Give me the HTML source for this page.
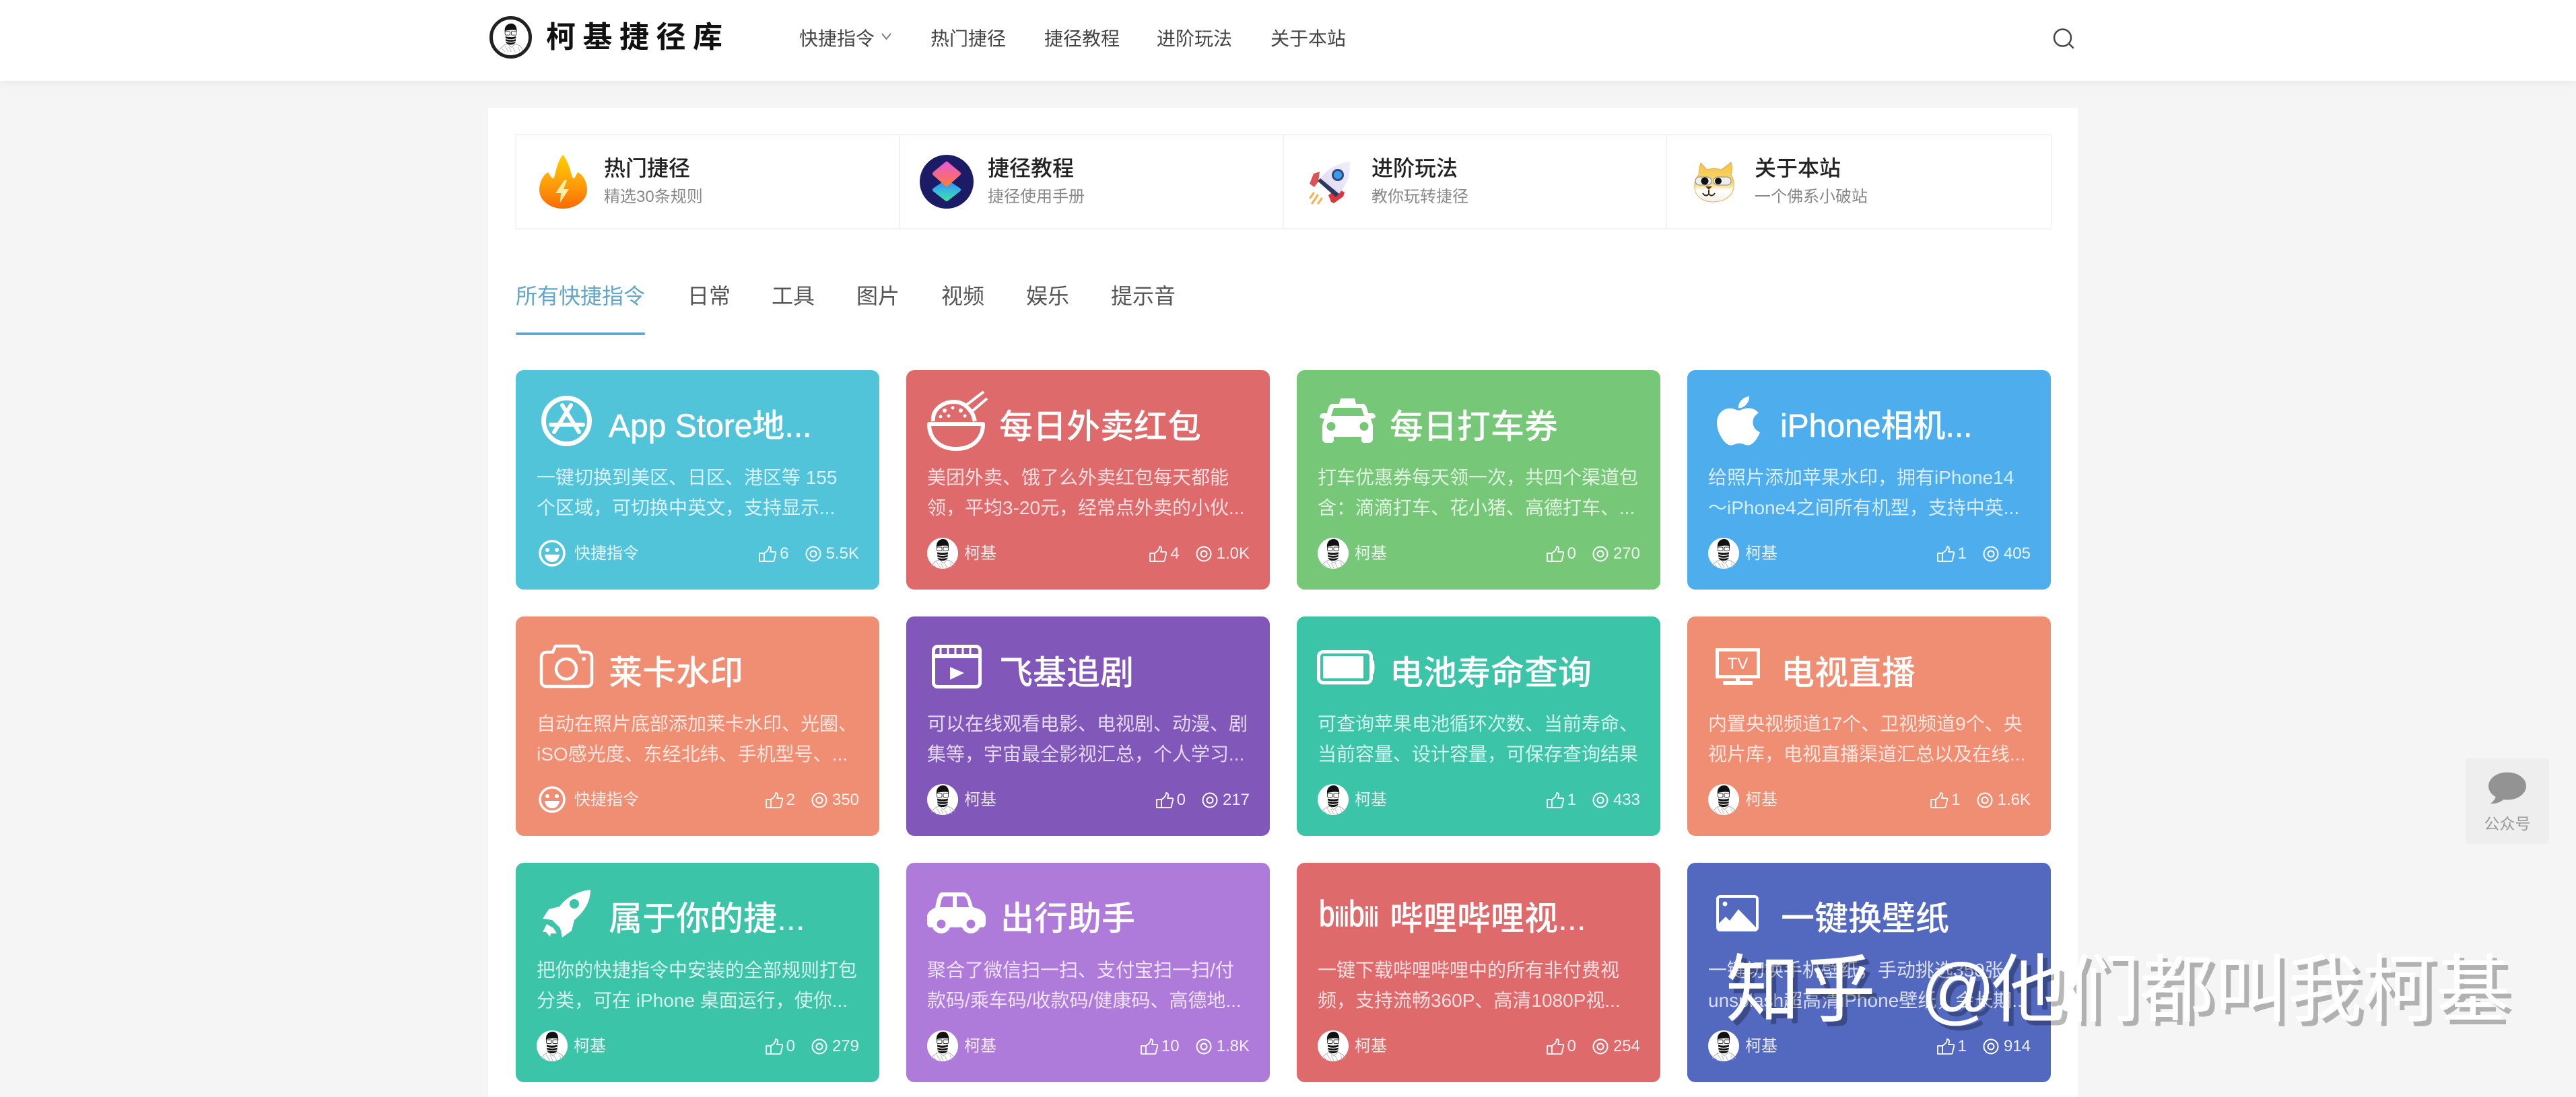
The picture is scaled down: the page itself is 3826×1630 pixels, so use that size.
<!DOCTYPE html>
<html lang="zh-CN"><head><meta charset="utf-8"><title>柯基捷径库</title>
<style>
*{box-sizing:border-box;margin:0;padding:0}
html,body{width:3826px;height:1630px;overflow:hidden;background:#f5f5f5;font-family:"Liberation Sans","Noto Sans CJK SC",sans-serif}
.abs,.hd,.panel,.card,.card>*{position:absolute}
.hd{left:0;top:0;width:3826px;height:120px;background:#fff;box-shadow:0 3px 14px rgba(0,0,0,.06)}
.logo{position:absolute;left:811px;top:24px;line-height:64px;font-size:44px;font-weight:700;letter-spacing:10.500px;color:#111;white-space:nowrap}
.nav{position:absolute;top:37px;line-height:42px;font-size:28px;color:#444;white-space:nowrap}
.panel{left:725px;top:160px;width:2361px;height:1470px;background:#fff}
.qbox{position:absolute;left:765px;top:199px;width:2283px;height:142px;border:2px solid #f4f4f4}
.qd{position:absolute;top:199px;width:2px;height:142px;background:#f2f2f2}
.qt{position:absolute;top:228px;line-height:44px;font-size:32px;font-weight:500;color:#222;white-space:nowrap}
.qs{position:absolute;top:275px;line-height:36px;font-size:24px;color:#888;white-space:nowrap}
.tab{position:absolute;top:416px;line-height:48px;font-size:32px;color:#555;white-space:nowrap}
.card{width:540px;height:326px;border-radius:12px;color:#fff;overflow:hidden}
.t{left:138px;top:54px;line-height:60px;font-size:50px;font-weight:500;white-space:nowrap}
.t.l{font-size:48px}
.t.r3{top:53px}
.t .m{-webkit-text-stroke:.6px #fff}
.d{left:31px;top:137px;line-height:45px;font-size:28px;color:rgba(255,255,255,.78);white-space:nowrap}
.av{left:31px;top:249px;width:46px;height:46px}
.sm{left:34px;top:252px;width:40px;height:40px}
.n{left:86px;top:255px;line-height:36px;font-size:24px;color:rgba(255,255,255,.85);white-space:nowrap}
.s{right:30px;top:255px;height:36px;line-height:36px;font-size:24px;display:flex;align-items:center;color:rgba(255,255,255,.88);white-space:nowrap}
.s svg{display:block}
.s .a{margin-left:5px}.s .b{margin-left:24px;margin-right:7px}
.ic{overflow:visible}
.wm{position:absolute;top:1402px;line-height:140px;font-size:110px;color:#fff;white-space:nowrap;text-shadow:7px 7px 0 rgba(0,0,0,.28);z-index:9}
.fb{position:absolute;left:3662px;top:1127px;width:124px;height:127px;background:#eee;border-radius:4px}
.fbt{position:absolute;left:0;width:124px;top:80px;text-align:center;line-height:34px;font-size:23px;color:#999}
</style></head><body>
<svg width="0" height="0" style="position:absolute">
<defs>
<symbol id="face" viewBox="0 0 46 46">
<path d="M6 42C10 36 15 33 19 33L24 38L30 33C35 34 39 37 41 42" fill="none" stroke="#aaa" stroke-width="1"/>
<path d="M14 36L20 45M26 38L30 45M20 37L24 45M10 40L14 45M34 37L37 44" stroke="#bbb" stroke-width="1"/>
<path d="M14 15C13 6 18 2 24 2C30 2 33 8 32 15L31 18H15Z" fill="#111"/>
<path d="M15 13C19 12 26 11 31 12L31 22H15Z" fill="#f2f2f2"/>
<rect x="14.500" y="14" width="7.500" height="5.500" rx="1.500" fill="#fff" stroke="#444" stroke-width="1"/>
<rect x="24" y="14" width="7.500" height="5.500" rx="1.500" fill="#fff" stroke="#444" stroke-width="1"/>
<path d="M15 21.500C19 23 27 23 31 21.500L30.500 30C28.500 35.500 17.500 35.500 15.500 30Z" fill="#111"/>
<path d="M15 25C20 26.800 26 26.800 31 25M15.500 29C20 30.800 26 30.800 30.500 29" stroke="#eee" stroke-width="1.300" fill="none"/>
</symbol>
<symbol id="avatar" viewBox="0 0 46 46">
<circle cx="23" cy="23" r="23" fill="#fff"/><use href="#face" width="46" height="46"/>
</symbol>
<symbol id="like" viewBox="0 0 26 24">
<path d="M8 11L12 8C14 6 15 3 15 1C18 1 19 4 17 9H23.500C25 9 25.500 10 25.200 11.200L22.600 22C22.300 23 21.500 23 21 23H8ZM1 11H8V23H1Z" fill="none" stroke="#fff" stroke-width="1.800" stroke-linejoin="round"/>
</symbol>
<symbol id="eye" viewBox="0 0 24 24">
<circle cx="12" cy="12" r="10.500" fill="none" stroke="#fff" stroke-width="2"/><circle cx="12" cy="12" r="4.500" fill="none" stroke="#fff" stroke-width="2"/>
</symbol>
<symbol id="smile" viewBox="0 0 40 40">
<circle cx="20" cy="20" r="18" fill="none" stroke="#fff" stroke-width="3.500"/>
<circle cx="13" cy="15" r="3" fill="#fff"/><circle cx="27" cy="15" r="3" fill="#fff"/>
<path d="M9 22H31C30 30 25 33 20 33C15 33 10 30 9 22Z" fill="#fff"/>
</symbol>
</defs></svg>

<div class="hd">
<svg class="abs" style="left:727px;top:24px" width="63" height="63" viewBox="0 0 63 63"><circle cx="31.500" cy="31.500" r="29" fill="#fff" stroke="#222" stroke-width="5"/><use href="#face" x="9" y="9" width="45" height="45"/></svg>
<div class="logo">柯基捷径库</div>
<div class="nav" style="left:1187px">快捷指令</div>
<svg class="abs" style="left:1308px;top:48px" width="17" height="12" viewBox="0 0 17 12"><path d="M2 2L8.500 10L15 2" fill="none" stroke="#777" stroke-width="1.800"/></svg>
<div class="nav" style="left:1382px">热门捷径</div>
<div class="nav" style="left:1551px">捷径教程</div>
<div class="nav" style="left:1718px">进阶玩法</div>
<div class="nav" style="left:1887px">关于本站</div>
<svg class="abs" style="left:3048px;top:40px" width="36" height="34" viewBox="0 0 36 34"><circle cx="15.500" cy="16" r="12.500" fill="none" stroke="#444" stroke-width="2.500"/><path d="M26 26L31 31" stroke="#444" stroke-width="2.500" stroke-linecap="round"/></svg>
</div>

<div class="panel"></div>
<div class="qbox"></div>
<div class="qd" style="left:1335px"></div><div class="qd" style="left:1905px"></div><div class="qd" style="left:2474px"></div>

<svg class="abs" style="left:801px;top:230px" width="71" height="80" viewBox="0 0 71 80"><defs><linearGradient id="fg" x1="0" y1="0" x2="0" y2="1"><stop offset="0" stop-color="#ffd000"/><stop offset=".55" stop-color="#ff9d0a"/><stop offset="1" stop-color="#fb6a05"/></linearGradient></defs>
<path d="M35 0C42 8 46 22 49 34L52 35L57 26C66 30 71 42 71 52C71 68 54 80 35 80C16 80 0 68 0 52C0 42 5 30 13 26L19 35L22 34C25 22 28 8 35 0Z" fill="url(#fg)"/>
<path d="M37 38L24 57H32L31 71L44 51H36L41 38Z" fill="#fdeea6"/></svg>
<div class="qt" style="left:897px">热门捷径</div><div class="qs" style="left:897px">精选30条规则</div>

<svg class="abs" style="left:1366px;top:230px" width="80" height="80" viewBox="0 0 80 80"><defs>
<linearGradient id="sa" x1="0" y1="0" x2="0" y2="1"><stop offset="0" stop-color="#ea5cc8"/><stop offset=".6" stop-color="#f56a80"/><stop offset="1" stop-color="#ff7a45"/></linearGradient>
<linearGradient id="sb" x1="0" y1="0" x2="0" y2="1"><stop offset="0" stop-color="#2f8ff5"/><stop offset=".6" stop-color="#38c0d8"/><stop offset="1" stop-color="#3fdca5"/></linearGradient></defs>
<circle cx="40" cy="40" r="40" fill="#1c1c66"/>
<path d="M40 40L58 52L40 66L22 52Z" fill="url(#sb)" stroke="url(#sb)" stroke-width="6" stroke-linejoin="round"/>
<path d="M40 13L58 28L40 44L22 28Z" fill="url(#sa)" stroke="url(#sa)" stroke-width="6" stroke-linejoin="round"/></svg>
<div class="qt" style="left:1467px">捷径教程</div><div class="qs" style="left:1467px">捷径使用手册</div>

<svg class="abs" style="left:1943px;top:240px" width="64" height="66" viewBox="0 0 64 66"><defs><linearGradient id="rb" x1="0" y1="1" x2="1" y2="0"><stop offset="0" stop-color="#dcd8f2"/><stop offset="1" stop-color="#f1effb"/></linearGradient></defs>
<path d="M8 18L17 15L15 30L9 38L2 33Z" fill="#d85457"/><path d="M34 60L30 50L44 40L54 46L52 52L38 62Z" fill="#d8373f"/>
<path d="M62 0C64 20 56 36 44 50L16 28C26 12 44 2 62 0Z" fill="url(#rb)"/>
<path d="M14 29L18 25L46 48L41 53Z" fill="#2d3a60"/>
<circle cx="44" cy="20" r="9" fill="#2f4a80"/><circle cx="44" cy="20" r="6" fill="#3f9bea"/>
<path d="M8 47L3 54M14 50L6 62M20 55L15 62" stroke="#f6b24a" stroke-width="3" stroke-linecap="round"/></svg>
<div class="qt" style="left:2037px">进阶玩法</div><div class="qs" style="left:2037px">教你玩转捷径</div>

<svg class="abs" style="left:2515px;top:240px" width="62" height="62" viewBox="0 0 62 62"><defs><linearGradient id="dg" x1="0" y1="0" x2="0" y2="1"><stop offset="0" stop-color="#f5c33f"/><stop offset=".55" stop-color="#f8d978"/><stop offset=".72" stop-color="#fff"/><stop offset="1" stop-color="#f4f0e6"/></linearGradient></defs>
<path d="M11 2L20 12C26 10 36 10 42 12L56 1C58 8 58 14 56 20C60 26 61 34 60 40C56 54 44 60 30 60C16 60 4 54 2 40C1 32 3 24 8 20C8 14 9 8 11 2Z" fill="url(#dg)" stroke="#e0a33c" stroke-width=".8"/>
<rect x="3" y="23" width="24" height="12" rx="6" fill="#eee" stroke="#888" stroke-width="1"/><rect x="30" y="23" width="26" height="12" rx="6" fill="#eee" stroke="#888" stroke-width="1"/>
<circle cx="17" cy="29" r="5.500" fill="#111"/><circle cx="37" cy="29" r="5" fill="#111"/>
<path d="M18 37H28L23 42Z" fill="#5b3a1a"/><path d="M23 42V48M14 47C17 52 21 51 23 48C25 51 29 52 32 47" stroke="#3a2a14" stroke-width="2" fill="none"/></svg>
<div class="qt" style="left:2606px">关于本站</div><div class="qs" style="left:2606px">一个佛系小破站</div>

<div class="tab" style="left:766px;color:#62a6c8">所有快捷指令</div>
<div class="abs" style="left:766px;top:494px;width:192px;height:4px;background:#62a6c8;border-radius:2px"></div>
<div class="tab" style="left:1021px">日常</div>
<div class="tab" style="left:1146px">工具</div>
<div class="tab" style="left:1272px">图片</div>
<div class="tab" style="left:1398px">视频</div>
<div class="tab" style="left:1524px">娱乐</div>
<div class="tab" style="left:1650px">提示音</div>

<!-- Row 1 -->
<div class="card" style="left:766px;top:550px;background:#52c4d9">
<svg class="ic" style="left:38px;top:38px" width="75" height="75" viewBox="0 0 75 75"><circle cx="37.500" cy="37.500" r="34" fill="none" stroke="#fff" stroke-width="7"/><path d="M31 14L56 54M44 14L19 54M14 43H62" fill="none" stroke="#fff" stroke-width="6" stroke-linecap="round"/></svg>
<div class="t l"><span class="m">App Store</span>地<span class="m">...</span></div>
<div class="d">一键切换到美区、日区、港区等 155<br>个区域，可切换中英文，支持显示...</div>
<svg class="sm"><use href="#smile" width="40" height="40"/></svg><div class="n" style="left:87px">快捷指令</div>
<div class="s"><svg width="26" height="24"><use href="#like" width="26" height="24"/></svg><span class="a">6</span><svg class="b" width="24" height="24"><use href="#eye" width="24" height="24"/></svg><span>5.5K</span></div>
</div>
<div class="card" style="left:1346px;top:550px;background:#de6a6c">
<svg class="ic" style="left:31px;top:30px" width="90" height="90" viewBox="0 0 90 90"><path d="M3 50H83C83 73 66 87 43 87C20 87 3 73 3 50Z" fill="none" stroke="#fff" stroke-width="6" stroke-linejoin="round"/><path d="M9 46C7 28 24 17 40 17C50 17 60 22 68 36L71 46" fill="none" stroke="#fff" stroke-width="6"/><path d="M58 22L84 2M67 31L89 12" stroke="#fff" stroke-width="4"/><circle cx="26" cy="30" r="3" fill="#fff"/><circle cx="38" cy="26" r="2.500" fill="#fff"/><circle cx="50" cy="30" r="3" fill="#fff"/><circle cx="32" cy="38" r="2.500" fill="#fff"/><circle cx="56" cy="38" r="2.500" fill="#fff"/><circle cx="20" cy="39" r="2.500" fill="#fff"/></svg>
<div class="t">每日外卖红包</div>
<div class="d">美团外卖、饿了么外卖红包每天都能<br>领，平均3-20元，经常点外卖的小伙...</div>
<svg class="av"><use href="#avatar" width="46" height="46"/></svg><div class="n">柯基</div>
<div class="s"><svg width="26" height="24"><use href="#like" width="26" height="24"/></svg><span class="a">4</span><svg class="b" width="24" height="24"><use href="#eye" width="24" height="24"/></svg><span>1.0K</span></div>
</div>
<div class="card" style="left:1926px;top:550px;background:#76c777">
<svg class="ic" style="left:34px;top:42px" width="83" height="66" viewBox="0 0 83 66"><path fill-rule="evenodd" fill="#fff" d="M31 0H52L54 8H64C68 8 70 12 72 22H78C82 22 83 26 83 28C80 30 77 30 76 30L79 40V60C79 64 76 66 73 66H66C63 66 62 64 62 60V57H21V60C21 64 20 66 17 66H10C7 66 4 64 4 60V40L7 30C4 30 1 29 0 28C0 25 2 22 5 22H11C13 12 15 8 19 8H29ZM21 14L17 26H66L62 14ZM17 35A6.500 6.500 0 1 0 17 48A6.500 6.500 0 1 0 17 35ZM66 35A6.500 6.500 0 1 0 66 48A6.500 6.500 0 1 0 66 35Z"/></svg>
<div class="t">每日打车券</div>
<div class="d">打车优惠券每天领一次，共四个渠道包<br>含：滴滴打车、花小猪、高德打车、...</div>
<svg class="av"><use href="#avatar" width="46" height="46"/></svg><div class="n">柯基</div>
<div class="s"><svg width="26" height="24"><use href="#like" width="26" height="24"/></svg><span class="a">0</span><svg class="b" width="24" height="24"><use href="#eye" width="24" height="24"/></svg><span>270</span></div>
</div>
<div class="card" style="left:2506px;top:550px;background:#4eaded">
<svg class="ic" style="left:44px;top:39px" width="62" height="73" viewBox="4 32 365 450" preserveAspectRatio="none"><path fill="#fff" d="M318.700 268.700c-.2-36.700 16.400-64.400 50-84.800-18.800-26.900-47.200-41.700-84.700-44.600-35.500-2.800-74.300 20.700-88.500 20.700-15 0-49.400-19.700-76.400-19.700C63.300 141.200 4 184.800 4 273.500q0 39.300 14.400 81.200c12.800 36.700 59 126.700 107.200 125.200 25.200-.6 43-17.900 75.800-17.900 31.800 0 48.300 17.900 76.400 17.900 48.600-.7 90.400-82.500 102.600-119.300-65.200-30.700-61.700-90-61.700-91.900zm-56.600-164.200c27.300-32.400 24.800-61.900 24-72.500-24.100 1.400-52 16.400-67.900 34.900-17.500 19.800-27.800 44.300-25.600 71.900 26.100 2 49.900-11.400 69.500-34.300z"/></svg>
<div class="t l"><span class="m">iPhone</span>相机<span class="m">...</span></div>
<div class="d">给照片添加苹果水印，拥有iPhone14<br>～iPhone4之间所有机型，支持中英...</div>
<svg class="av"><use href="#avatar" width="46" height="46"/></svg><div class="n">柯基</div>
<div class="s"><svg width="26" height="24"><use href="#like" width="26" height="24"/></svg><span class="a">1</span><svg class="b" width="24" height="24"><use href="#eye" width="24" height="24"/></svg><span>405</span></div>
</div>

<!-- Row 2 -->
<div class="card" style="left:766px;top:916px;background:#f08e74">
<svg class="ic" style="left:35px;top:41px" width="81" height="65" viewBox="0 0 81 65"><path d="M3 20C3 14 7 12 12 12H20L24 3H57L61 12H70C75 12 78 15 78 20V56C78 60 75 63 70 63H11C6 63 3 60 3 56Z" fill="none" stroke="#fff" stroke-width="4.500" stroke-linejoin="round"/><circle cx="40" cy="37" r="15" fill="none" stroke="#fff" stroke-width="4.500"/><circle cx="66" cy="22" r="3" fill="#fff"/></svg>
<div class="t">莱卡水印</div>
<div class="d">自动在照片底部添加莱卡水印、光圈、<br>iSO感光度、东经北纬、手机型号、...</div>
<svg class="sm"><use href="#smile" width="40" height="40"/></svg><div class="n" style="left:87px">快捷指令</div>
<div class="s"><svg width="26" height="24"><use href="#like" width="26" height="24"/></svg><span class="a">2</span><svg class="b" width="24" height="24"><use href="#eye" width="24" height="24"/></svg><span>350</span></div>
</div>
<div class="card" style="left:1346px;top:916px;background:#8158b9">
<svg class="ic" style="left:38px;top:42px" width="74" height="65" viewBox="0 0 74 65"><rect x="2.500" y="2.500" width="69" height="60" rx="6" fill="none" stroke="#fff" stroke-width="5"/><path d="M2 17H72" stroke="#fff" stroke-width="6"/><path d="M13 3V15M24 3V15M35 3V15M46 3V15M57 3V15" stroke="#fff" stroke-width="3"/><path d="M27 33L48 42L27 52Z" fill="#fff"/></svg>
<div class="t">飞基追剧</div>
<div class="d">可以在线观看电影、电视剧、动漫、剧<br>集等，宇宙最全影视汇总，个人学习...</div>
<svg class="av"><use href="#avatar" width="46" height="46"/></svg><div class="n">柯基</div>
<div class="s"><svg width="26" height="24"><use href="#like" width="26" height="24"/></svg><span class="a">0</span><svg class="b" width="24" height="24"><use href="#eye" width="24" height="24"/></svg><span>217</span></div>
</div>
<div class="card" style="left:1926px;top:916px;background:#3cc4a8">
<svg class="ic" style="left:30px;top:50px" width="87" height="51" viewBox="0 0 87 51"><rect x="2.500" y="2.500" width="78" height="46" rx="7" fill="none" stroke="#fff" stroke-width="5"/><rect x="9" y="9" width="60" height="33" fill="#fff"/><path d="M80 15H84C86 18 86 32 84 36H80Z" fill="#fff"/></svg>
<div class="t">电池寿命查询</div>
<div class="d">可查询苹果电池循环次数、当前寿命、<br>当前容量、设计容量，可保存查询结果</div>
<svg class="av"><use href="#avatar" width="46" height="46"/></svg><div class="n">柯基</div>
<div class="s"><svg width="26" height="24"><use href="#like" width="26" height="24"/></svg><span class="a">1</span><svg class="b" width="24" height="24"><use href="#eye" width="24" height="24"/></svg><span>433</span></div>
</div>
<div class="card" style="left:2506px;top:916px;background:#f08e74">
<svg class="ic" style="left:42px;top:47px" width="66" height="56" viewBox="0 0 66 56"><rect x="2.500" y="2.500" width="61" height="40" fill="none" stroke="#fff" stroke-width="5"/><rect x="30" y="42" width="6" height="8" fill="#fff"/><rect x="11" y="49" width="44" height="6" fill="#fff"/><text x="33" y="31" text-anchor="middle" font-family="Liberation Sans" font-size="24" fill="#fff">TV</text></svg>
<div class="t" style="left:139px">电视直播</div>
<div class="d">内置央视频道17个、卫视频道9个、央<br>视片库，电视直播渠道汇总以及在线...</div>
<svg class="av"><use href="#avatar" width="46" height="46"/></svg><div class="n">柯基</div>
<div class="s"><svg width="26" height="24"><use href="#like" width="26" height="24"/></svg><span class="a">1</span><svg class="b" width="24" height="24"><use href="#eye" width="24" height="24"/></svg><span>1.6K</span></div>
</div>

<!-- Row 3 -->
<div class="card" style="left:766px;top:1282px;background:#3cc4a8">
<svg class="ic" style="left:39px;top:39px" width="73" height="72" viewBox="0 0 73 72"><path fill-rule="evenodd" fill="#fff" d="M72 1C55 3 38 10 26 26L10 30L1 44L15 46L27 58L30 72L44 62L48 46C62 34 72 20 72 1ZM48 15A7 7 0 1 0 48 29A7 7 0 1 0 48 15Z"/><path d="M7 52L17 58L22 66L13 66L12 71L6 64L1 64Z" fill="#fff"/></svg>
<div class="t r3">属于你的捷...</div>
<div class="d">把你的快捷指令中安装的全部规则打包<br>分类，可在 iPhone 桌面运行，使你...</div>
<svg class="av"><use href="#avatar" width="46" height="46"/></svg><div class="n">柯基</div>
<div class="s"><svg width="26" height="24"><use href="#like" width="26" height="24"/></svg><span class="a">0</span><svg class="b" width="24" height="24"><use href="#eye" width="24" height="24"/></svg><span>279</span></div>
</div>
<div class="card" style="left:1346px;top:1282px;background:#ae7bda">
<svg class="ic" style="left:31px;top:44px" width="88" height="62" viewBox="0 0 88 62"><path fill-rule="evenodd" fill="#fff" d="M22 0H54C60 0 64 6 68 22C78 24 87 28 87 38V46C87 49 85 52 82 52H4C2 52 0 49 0 46V36C0 30 6 25 12 23C15 8 17 0 22 0ZM26 6C22 6 21 12 19 22H38V6ZM44 6V22H62C60 12 58 6 54 6Z"/><circle cx="21" cy="47" r="14" fill="#fff"/><circle cx="21" cy="47" r="6.500" fill="#ae7bda"/><circle cx="65" cy="47" r="14" fill="#fff"/><circle cx="65" cy="47" r="6.500" fill="#ae7bda"/></svg>
<div class="t r3" style="left:140px">出行助手</div>
<div class="d">聚合了微信扫一扫、支付宝扫一扫/付<br>款码/乘车码/收款码/健康码、高德地...</div>
<svg class="av"><use href="#avatar" width="46" height="46"/></svg><div class="n">柯基</div>
<div class="s"><svg width="26" height="24"><use href="#like" width="26" height="24"/></svg><span class="a">10</span><svg class="b" width="24" height="24"><use href="#eye" width="24" height="24"/></svg><span>1.8K</span></div>
</div>
<div class="card" style="left:1926px;top:1282px;background:#de6a6c">
<svg class="ic" style="left:33px;top:56px" width="88" height="40" viewBox="0 0 88 40"><g transform="scale(.78 1)"><text x="0" y="38" font-family="Liberation Sans" fill="#fff" stroke="#fff" stroke-width="1.200"><tspan font-size="54">b</tspan><tspan font-size="40">ili</tspan><tspan font-size="54">b</tspan><tspan font-size="40">ili</tspan></text></g></svg>
<div class="t r3">哔哩哔哩视...</div>
<div class="d">一键下载哔哩哔哩中的所有非付费视<br>频，支持流畅360P、高清1080P视...</div>
<svg class="av"><use href="#avatar" width="46" height="46"/></svg><div class="n">柯基</div>
<div class="s"><svg width="26" height="24"><use href="#like" width="26" height="24"/></svg><span class="a">0</span><svg class="b" width="24" height="24"><use href="#eye" width="24" height="24"/></svg><span>254</span></div>
</div>
<div class="card" style="left:2506px;top:1282px;background:#5368bf">
<svg class="ic" style="left:43px;top:48px" width="63" height="54" viewBox="0 0 63 54"><rect x="2" y="2" width="59" height="50" rx="4" fill="none" stroke="#fff" stroke-width="4"/><circle cx="13" cy="13" r="3.500" fill="#fff"/><path d="M3 43L14 32L20 38L33 21L60 49V53H3Z" fill="#fff"/></svg>
<div class="t r3" style="left:139px">一键换壁纸</div>
<div class="d">一键切换手机壁纸，手动挑选350张<br>unsplash超高清iPhone壁纸，会长期...</div>
<svg class="av"><use href="#avatar" width="46" height="46"/></svg><div class="n">柯基</div>
<div class="s"><svg width="26" height="24"><use href="#like" width="26" height="24"/></svg><span class="a">1</span><svg class="b" width="24" height="24"><use href="#eye" width="24" height="24"/></svg><span>914</span></div>
</div>

<div class="fb">
<svg class="abs" style="left:32px;top:20px" width="60" height="50" viewBox="0 0 60 50"><ellipse cx="30" cy="21" rx="28" ry="20.500" fill="#939393"/><path d="M14 34C12 40 10 43 5 47C14 48 22 44 28 38Z" fill="#939393"/></svg>
<div class="fbt">公众号</div>
</div>

<div class="wm" style="left:2563px;letter-spacing:3px">知乎</div>
<div class="wm" style="left:2852px">@</div>
<div class="wm" style="left:2958px">他们都叫我柯基</div>
</body></html>
